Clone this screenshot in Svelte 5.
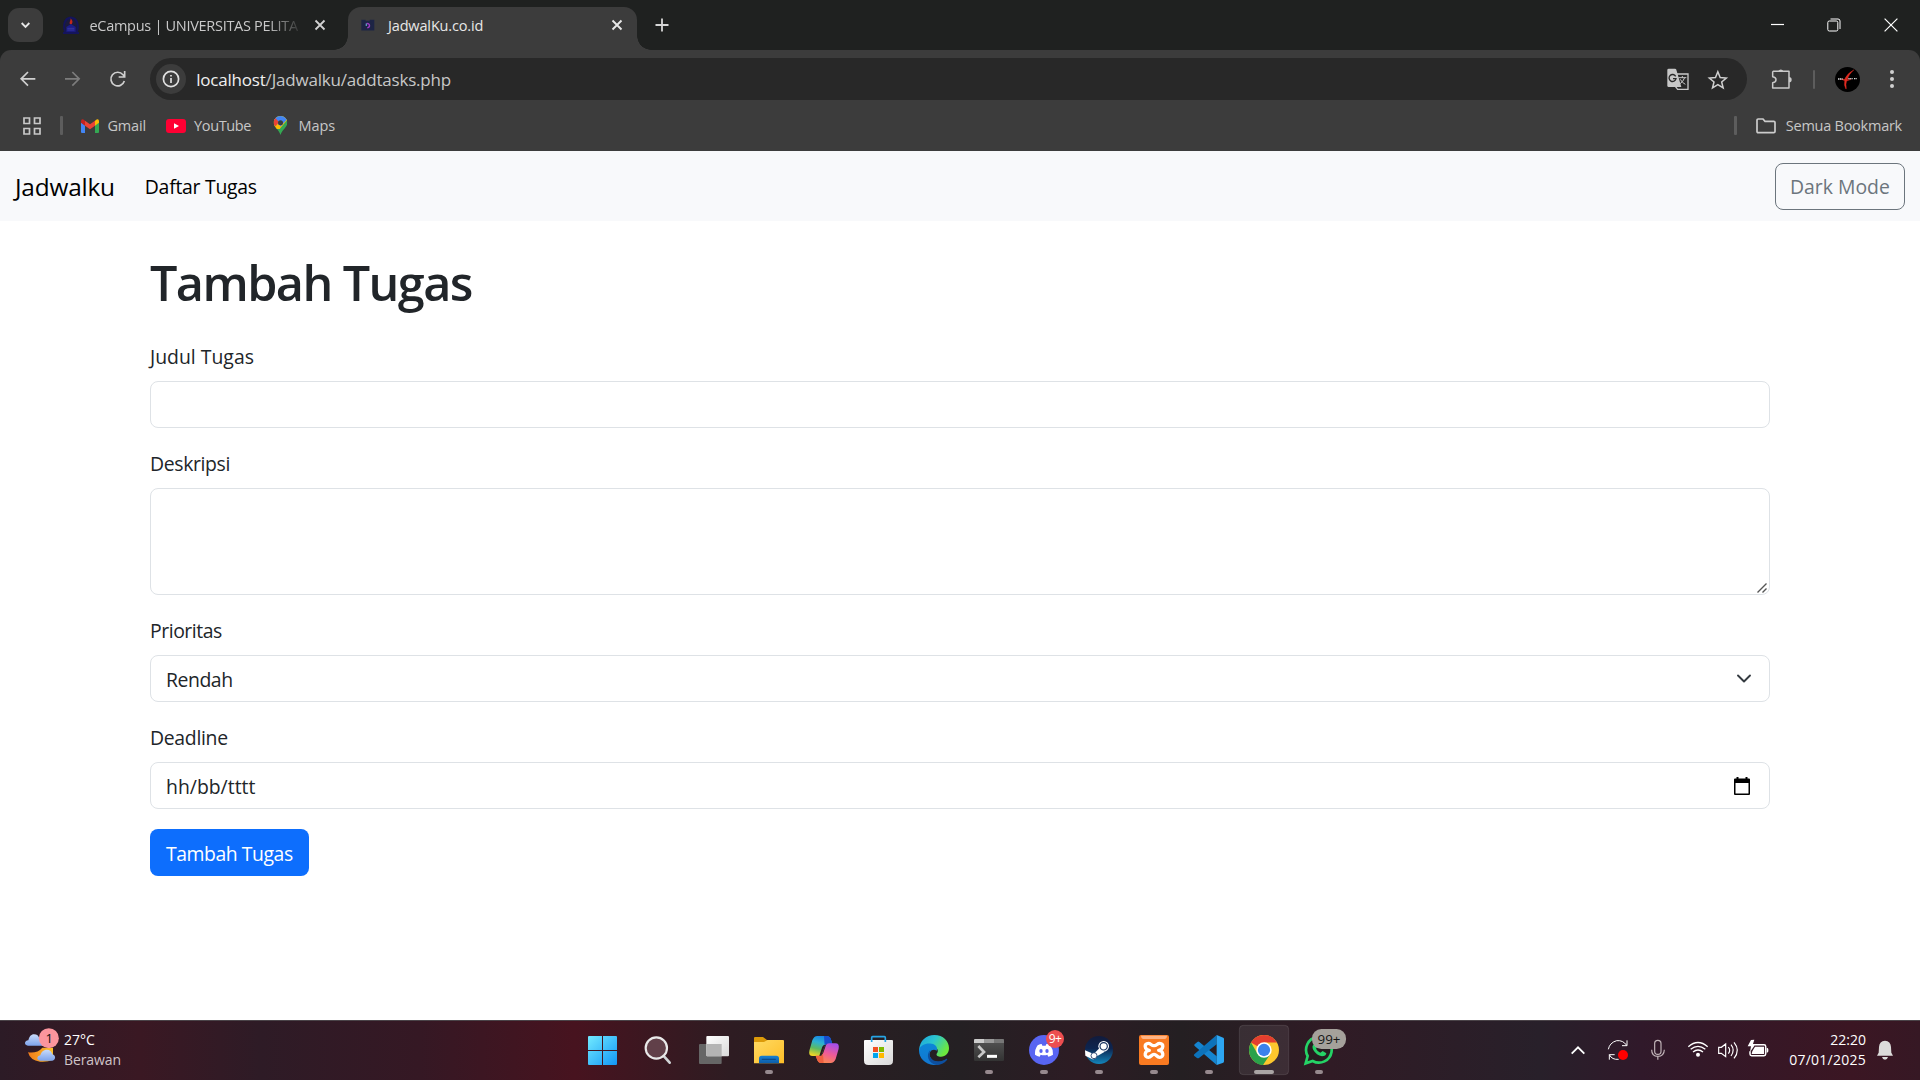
<script>
  const fields = [
    { label: 'Judul Tugas', kind: 'text', value: '' },
    { label: 'Deskripsi', kind: 'area', value: '' },
    { label: 'Prioritas', kind: 'select', value: 'Rendah' },
    { label: 'Deadline', kind: 'date', value: 'hh/bb/tttt' }
  ];
</script>

<div class="screen">
  <div class="tabstrip">
    <div class="tabsearch">
      <svg width="35" height="34" viewBox="24 24 105 102"><path d="M65 69l11.500 11.500L88 69" fill="none" stroke="#e8e8e8" stroke-width="5.500" /></svg>
    </div>
    <div class="tab idle">
      <svg class="fav" width="18" height="20" viewBox="184 44 54 60">
        <path d="M187 101h48v-6h-4c7-14 3-34-7-42-9-6-18-6-27 0-10 8-12 28-6 42h-4z" fill="#14145c" />
        <path d="M196 92c-8-15-2-36 15-37 17 1 22 22 14 37z" fill="#1b1b3c" />
        <path d="M210 54c6 7 7 12 3 18h-5c-3-7 2-10 2-18z" fill="#c3271b" />
        <path d="M197 80l14-9 14 9v14h-28z" fill="#1c1c88" /><path d="M200 84h21m-21 5h21" stroke="#4545a8" stroke-width="2" />
      </svg>
      <span class="tabtitle faded"><span class="t ec">eCampus | UNIVERSITAS PELITA</span></span>
      <svg class="x1" width="12" height="12" viewBox="0 0 12 12"><path d="M1.500 1.500l9 9m0-9l-9 9" stroke="#d2d2d2" stroke-width="1.800" /></svg>
    </div>
    <div class="tab current">
      <svg class="fav2" width="14" height="12" viewBox="64 58 40 34">
        <path d="M65 60h12v3h12v-3h13v31H65z" fill="#1d2445" /><path d="M80 71c9-2 12 9 2 12" fill="none" stroke="#a13ac4" stroke-width="4" /><path d="M79 71v7" stroke="#72b4e3" stroke-width="3" />
      </svg>
      <span class="tabtitle"><span class="t jk">JadwalKu.co.id</span></span>
      <svg width="12" height="12" viewBox="0 0 12 12"><path d="M1.500 1.500l9 9m0-9l-9 9" stroke="#e8e8e8" stroke-width="1.900" /></svg>
    </div>
    <svg class="plus" width="14" height="14" viewBox="0 0 14 14"><path d="M7 .5v13M.5 7h13" stroke="#d6d6d6" stroke-width="1.800" /></svg>
    <div class="winbtns">
      <svg width="13" height="14" viewBox="0 0 13 14"><path d="M0 6.500h13" stroke="#fff" stroke-width="1.200" /></svg>
      <svg width="14" height="14" viewBox="0 0 14 14" fill="none" stroke="#fff"><rect x=".8" y="3" width="10" height="10" rx="1.500" /><path d="M3.500 1h7.500q2 0 2 2v8" /></svg>
      <svg width="14" height="14" viewBox="0 0 14 14"><path d="M.6.6l12.800 12.800m0-12.800L.6 13.400" stroke="#fff" stroke-width="1.200" /></svg>
    </div>
  </div>

  <div class="toolwrap">
    <div class="toolbar">
      <svg width="20" height="20" viewBox="53 207 60 60" fill="none" stroke="#d0d0d0" stroke-width="5"><path d="M105 236.500H63M83 216l-20.500 20.500L83 257" /></svg>
      <svg width="20" height="20" viewBox="189 207 60 60" fill="none" stroke="#7c7c7c" stroke-width="5"><path d="M195 236.500h42M217 216l20.500 20.500L217 257" /></svg>
      <svg width="20" height="20" viewBox="324 207 60 60" fill="none" stroke="#d0d0d0" stroke-width="5"><path d="M373 243a20.500 20.500 0 1 1-4-19l4 5M374 213v18h-18" /></svg>
      <div class="omnibox">
        <span class="info"><svg width="18" height="18" viewBox="0 0 18 18"><circle cx="9" cy="9" r="7.600" fill="none" stroke="#e0e0e0" stroke-width="1.700" /><path d="M9 8v5M9 4.900v1.700" stroke="#e0e0e0" stroke-width="1.700" /></svg></span>
        <span class="url t"><b>localhost</b>/Jadwalku/addtasks.php</span>
        <svg width="22" height="22" viewBox="200 205 66 66">
          <path d="M230 223h33v46h-31l-7-9" fill="none" stroke="#c7c7c7" stroke-width="4" />
          <path d="M205 207h19q3 0 4 3l15 52h-38q-4 0-4-4v-47q0-4 4-4z" fill="#c7c7c7" />
          <path d="M226 230a10.500 10.500 0 1 0 1 7h-9" fill="none" stroke="#282828" stroke-width="4" />
          <path d="M234 234h24M246 229v5M253 234q-4 12-16 20M240 239q5 10 15 15" fill="none" stroke="#c7c7c7" stroke-width="3" />
        </svg>
        <svg width="20" height="20" viewBox="323 208 60 60"><path d="M352.500 216l7 17.500 18.500 1.500-14 12 4.500 18-16-10-16 10 4.500-18-14-12 18.500-1.500z" fill="none" stroke="#d0d0d0" stroke-width="4.500" /></svg>
      </div>
      <svg class="ext" width="22" height="22" viewBox="511 202 66 66"><path d="M518 212h47v50h-49v-16q10-1 10-9t-10-9v-14z" fill="none" stroke="#c9c9c9" stroke-width="4.500" stroke-linejoin="round" /><path d="M533 212a8 8 0 0 1 15 0zM565 229a8 8 0 0 1 0 16z" fill="#c9c9c9" /></svg>
      <i class="bar thin"></i>
      <svg class="avatar" width="25" height="25" viewBox="705 198 75 75"><circle cx="742.500" cy="235.500" r="37.500" fill="#000" /><path d="M762 206q-22 12-28 29l-12-1 12 5q-3 12 3 24 2 2 2-1-3-12 1-22l14-5-12 1q4-16 20-30z" fill="#e02a20" stroke="#e02a20" stroke-width="1" /><path d="M714 234h14m17-1h13m4 0h8" stroke="#ddd" stroke-width="4" stroke-dasharray="4 1.500" /></svg>
      <svg class="dots" width="6" height="20" viewBox="0 0 6 20" fill="#d0d0d0"><circle cx="3" cy="3" r="2" /><circle cx="3" cy="10" r="2" /><circle cx="3" cy="17" r="2" /></svg>
    </div>
    <div class="bookmarks">
      <svg width="18" height="18" viewBox="0 0 18 18" fill="none" stroke="#c8c8c8" stroke-width="1.700"><path d="M1 1h5.500v5.500H1zM11.500 1H17v5.500h-5.500zM1 11.500h5.500V17H1zM11.500 11.500H17V17h-5.500z" /></svg>
      <i class="bar"></i>
      <svg class="gm" width="18" height="14" viewBox="243 356 54 42"><path d="M243 366l12 9v23h-9q-3 0-3-3z" fill="#4285f4" /><path d="M297 366l-12 9v23h9q3 0 3-3z" fill="#34a853" /><path d="M285 361l6-4q6-1 6 6v4l-12 9z" fill="#fbbc04" /><path d="M255 361l15 11 15-11v15l-15 11-15-11z" fill="#ea4335" /><path d="M243 363q0-7 6-6l6 4v15l-12-9z" fill="#c5221f" /></svg>
      <span class="t gmail">Gmail</span>
      <svg class="yt" width="20" height="14" viewBox="0 0 20 14"><rect width="20" height="14" rx="3" fill="#f03" /><path d="M8 4.200v5.600L13 7z" fill="#fff" /></svg>
      <span class="t youtube">YouTube</span>
      <svg class="mp" width="15" height="19" viewBox="821 348 45 57"><clipPath id="pin"><path d="M843.500 348c12 0 20.500 9 20.500 20 0 14-15 19-20.500 37-5-18-20.500-23-20.500-37 0-11 9-20 20.500-20z" /></clipPath><g clip-path="url(#pin)"><path d="M821 348h45v57h-45z" fill="#34a853" /><path d="M821 345h45v12l-25 30h-20z" fill="#fbbc04" /><path d="M821 345h45v8l-22 26-23-20z" fill="#4285f4" /><path d="M866 355l-24 25 8-18z" fill="#4285f4" /><path d="M821 352l6 1 12 13-10 13-8-6z" fill="#ea4335" /></g><circle cx="843.500" cy="368" r="7.500" fill="#3c3c3c" /></svg>
      <span class="t maps">Maps</span>
      <i class="bar right"></i>
      <svg class="fold" width="20" height="16" viewBox="0 0 20 16"><path d="M1 2.200q0-1.200 1.200-1.200H7l2 2.300h8.800q1.200 0 1.200 1.200v9q0 1.200-1.200 1.200H2.200Q1 14.700 1 13.500z" fill="none" stroke="#ccc" stroke-width="1.700" /></svg>
      <span class="t semua">Semua Bookmark</span>
    </div>
  </div>

  <nav>
    <span class="t brand">Jadwalku</span>
    <span class="t navlink">Daftar Tugas</span>
    <button class="dark"><span class="t">Dark Mode</span></button>
  </nav>

  <main>
    <h1>Tambah Tugas</h1>
    {#each fields as f}
      <div class="field {f.kind}">
        <div class="label">{f.label}</div>
        <div class="control">
          <span class="t value">{f.value}</span>
          {#if f.kind === 'select'}
            <svg width="14" height="9" viewBox="0 0 14 9"><path d="M1 1.500l6 6 6-6" fill="none" stroke="#343a40" stroke-width="1.900" stroke-linecap="round" stroke-linejoin="round" /></svg>
          {:else if f.kind === 'date'}
            <svg width="16" height="18" viewBox="0 0 16 18"><path fill="#000" fill-rule="evenodd" d="M2.500 0h2v1.500h7V0h2v1.500H15q1 0 1 1V17q0 1-1 1H1q-1 0-1-1V2.500q0-1 1-1h1.500zM1.500 6v10.500h13V6z" /></svg>
          {:else if f.kind === 'area'}
            <svg class="grip" width="10" height="10" viewBox="0 0 10 10"><path d="M.5 9.500l9-9M5.500 9.500l4-4" stroke="#555" stroke-width="1.400" /></svg>
          {/if}
        </div>
      </div>
    {/each}
    <button class="submit">Tambah Tugas</button>
  </main>

  <footer>
    <div class="weather">
      <svg class="sky" width="36" height="36" viewBox="72 20 108 108">
        <defs><linearGradient id="cl" x2="0" y2="1"><stop stop-color="#c9dbfa" /><stop offset="1" stop-color="#7da3ec" /></linearGradient><linearGradient id="mn" x2="1" y2="0"><stop stop-color="#ef7a1b" /><stop offset="1" stop-color="#fdc22d" /></linearGradient></defs>
        <path d="M84 96q28 4 43-14h32v36q-18 8-39 6-30-4-36-28z" fill="url(#mn)" />
        <path d="M84 76c-12 0-12-15 1-16 3-11 8-18 17-18s14 5 16 12h10v22z" fill="url(#cl)" />
        <path d="M121 121c-12-1-12-14 0-16 3-12 12-17 20-17s14 5 16 14c11 2 11 18 0 19z" fill="url(#cl)" />
        <circle cx="146.500" cy="53.500" r="30" fill="#fb959d" />
        <text x="148" y="67" font-size="39" text-anchor="middle" fill="#111">1</text>
      </svg>
      <div class="wtext"><span class="t deg">27°C</span><span class="t ber">Berawan</span></div>
    </div>

    <div class="apps">
      <svg viewBox="21 15 150 150"><defs><linearGradient id="wn" x2="1" y2="1"><stop stop-color="#72eaff" /><stop offset="1" stop-color="#1296f5" /></linearGradient></defs><path d="M57 48h39v42H54V51q0-3 3-3zM99 48h39q3 0 3 3v39H99zM54 93h42v42H57q-3 0-3-3zM99 93h42v39q0 3-3 3H99z" fill="url(#wn)" /></svg>
      <svg viewBox="186 15 150 150"><path d="M280 107l19 21" stroke="#d0d4d6" stroke-width="8" stroke-linecap="round" /><circle cx="259" cy="84" r="32" fill="#6b4b54" fill-opacity=".8" stroke="#e9e9e9" stroke-width="6.500" /></svg>
      <svg viewBox="351 15 150 150"><defs><linearGradient id="tv" x2="1" y2="1"><stop stop-color="#fff" /><stop offset="1" stop-color="#d9d9d9" /></linearGradient></defs><rect x="387" y="72" width="68" height="60" rx="3" fill="#666" /><rect x="409" y="48" width="68" height="61" rx="3" fill="url(#tv)" /><path d="M409 72h46v37h-43q-3 0-3-3z" fill="#b4b4b4" /></svg>
      <svg viewBox="516 15 150 150"><defs><linearGradient id="fd" x2="1" y2="1"><stop stop-color="#ffda62" /><stop offset="1" stop-color="#fdbd27" /></linearGradient><linearGradient id="fb" x2="0" y2="1"><stop stop-color="#1780d2" /><stop offset="1" stop-color="#0d5da8" /></linearGradient></defs><path d="M552 54q0-3 3-3h24l12 9h48v20h-87z" fill="#dc9a09" /><path d="M552 66h30l11-6h46q3 0 3 3v67h-90z" fill="url(#fd)" /><path d="M567 130v-15q0-8 8-8h44q8 0 8 8v15z" fill="url(#fb)" /><path d="M577 118h39" stroke="#0a4b8d" stroke-width="4" stroke-linecap="round" /><rect class="ind" x="585" y="150" width="24" height="12" rx="6" /></svg>
      <svg viewBox="681 15 150 150">
        <defs><linearGradient id="ca" x1=".6" y1="0" x2=".3" y2="1"><stop stop-color="#1683e8" /><stop offset=".35" stop-color="#2db1d1" /><stop offset=".65" stop-color="#5cba62" /><stop offset="1" stop-color="#eed526" /></linearGradient><linearGradient id="cb" x1=".7" y1="0" x2=".3" y2="1"><stop stop-color="#a64eea" /><stop offset=".5" stop-color="#ef5b97" /><stop offset="1" stop-color="#fb8b4b" /></linearGradient></defs>
        <path d="M742 48h28q10 0 13 11l4 12h-13q-8 0-11 10l-7 20q-2 7-10 7h-18q-13 0-10-16l9-31q5-13 15-13z" fill="url(#ca)" />
        <path d="M762 48h8q10 0 13 11l4 12h-13q-8 0-10 7z" fill="#174dcd" />
        <path d="M782 129h-28q-10 0-13-11l-4-11h13q7 0 10-9l7-20q2-8 11-8h18q13 0 10 16l-9 31q-5 12-15 12z" fill="url(#cb)" />
        <path d="M761 129h-8q-9 0-12-11l-4-11h13q7 0 9-6z" fill="#ee6040" />
        <path d="M767 74l-4 7-9 26h-6l9-27q2-6 10-6z" fill="#2c1c20" />
      </svg>
      <svg viewBox="846 15 150 150"><path d="M905 66V53q0-3 3-3h35q3 0 3 3v13" fill="none" stroke="#27a6e6" stroke-width="5" /><path d="M885 60h81q3 0 3 3v59q0 13-13 13h-61q-13 0-13-13V63q0-3 3-3z" fill="url(#tv)" /><path d="M905 66v-6M946 66v-6" stroke="#27a6e6" stroke-width="5" /><path d="M909 81h15v15h-15z" fill="#f25022" /><path d="M927 81h15v15h-15z" fill="#7fba00" /><path d="M909 99h15v15h-15z" fill="#00a4ef" /><path d="M927 99h15v15h-15z" fill="#ffb900" /></svg>
      <svg viewBox="1011 15 150 150">
        <defs><linearGradient id="ea" x2="1" y2=".5"><stop stop-color="#1aa2df" /><stop offset=".5" stop-color="#2cc5cf" /><stop offset="1" stop-color="#6ce83f" /></linearGradient><linearGradient id="eb" x2="0" y2="1"><stop stop-color="#0c86d8" /><stop offset="1" stop-color="#1276cf" /></linearGradient></defs>
        <path d="M1047 91c2-30 22-46 46-46 27 0 44 19 44 39 0 16-10 26-24 26-9 0-15-4-13-9 7-7 4-20-12-20-20 0-37 6-41 14z" fill="url(#ea)" />
        <path d="M1047 91c3-17 22-23 38-20 13 2 19 12 15 21-12-9-26 4-20 18 7 17 26 20 44 11-9 11-22 15-33 14-26-2-44-20-44-44z" fill="url(#eb)" />
        <path d="M1081 90c-8 18 4 35 24 34 11 0 18-4 24-8 2 0 4 1 2 4-8 10-20 15-31 15-25-4-34-30-19-45z" fill="#0d4f9f" />
      </svg>
      <svg class="later" viewBox="12 15 150 150"><defs><linearGradient id="tm" x2="0" y2="1"><stop stop-color="#555" /><stop offset="1" stop-color="#333" /></linearGradient></defs><rect x="42" y="57" width="90" height="66" rx="4" fill="url(#tm)" /><path d="M46 57h26v12H42v-8q0-4 4-4z" fill="#ccc" /><path d="M72 57h30v12H72z" fill="#999" /><path d="M102 57h26q4 0 4 4v8h-30z" fill="#777" /><path d="M55 78l17 18-17 16" fill="none" stroke="#c8c8c8" stroke-width="8" /><path d="M81 109h30" stroke="#fff" stroke-width="9" /><rect class="ind" x="75" y="150" width="24" height="12" rx="6" /></svg>
      <svg viewBox="177 15 150 150"><circle cx="252" cy="90" r="45" fill="#5865f2" /><path d="M233 76q8-4 12-4l2 5h10l2-5q6 0 12 4 9 13 8 28-7 5-14 6l-3-6q-10 3-20 0l-3 6q-8-1-14-6-1-16 8-28z" fill="#fff" /><ellipse cx="243" cy="93" rx="5" ry="6" fill="#5865f2" /><ellipse cx="261" cy="93" rx="5" ry="6" fill="#5865f2" /><circle cx="285" cy="57" r="27" fill="#ed4e50" /><text class="nine" x="285" y="69" font-size="36" text-anchor="middle" fill="#fff">9+</text><rect class="ind" x="240" y="150" width="24" height="12" rx="6" /></svg>
      <svg viewBox="342 15 150 150"><defs><linearGradient id="st" x2="0" y2="1"><stop stop-color="#111b3c" /><stop offset=".45" stop-color="#0d2550" /><stop offset="1" stop-color="#1386bb" /></linearGradient></defs><circle cx="417" cy="90" r="42" fill="url(#st)" /><path d="M375 91l26 11 20-20 12 14-22 13q-5 13-17 7l-18-9z" fill="#fff" /><circle cx="431" cy="79" r="16" fill="#fff" /><circle cx="431" cy="79" r="11" fill="#fff" stroke="#173361" stroke-width="3.500" /><circle cx="402" cy="107" r="9" fill="#fff" stroke="#173361" stroke-width="2.500" /><rect class="ind" x="405" y="150" width="24" height="12" rx="6" /></svg>
      <svg viewBox="507 15 150 150"><rect x="537" y="45" width="90" height="90" rx="6" fill="#f97a21" /><path d="M543 47h78q0 10-10 10h-58q-10 0-10-10z" fill="#fdb385" /><path d="M568 91c-15-2-17-21-3-21 8 0 8 7 17 7s9-7 17-7c14 0 12 19-3 21 15 1 17 21 3 21-9 0-9-9-17-9s-8 9-17 9c-14 0-12-20 3-21z" fill="none" stroke="#fff" stroke-width="10" stroke-linejoin="round" /><rect class="ind" x="570" y="150" width="24" height="12" rx="6" /></svg>
      <svg viewBox="672 15 150 150"><path d="M770 135l-66-57q-3-3 0-5l8-7q3-3 6 0l52 43z" fill="#1584cf" /><path d="M703 103q-3 2 0 5l8 6q3 2 6 0l53-41V45z" fill="#0d73bb" /><path d="M770 45l20 8q2 1 2 4v67q0 3-2 4l-20 7z" fill="#2da6f2" /><rect class="ind" x="735" y="150" width="24" height="12" rx="6" /></svg>
      <svg viewBox="837 15 150 150"><rect x="838" y="16" width="148" height="148" rx="12" fill="#fff" fill-opacity=".08" stroke="#fff" stroke-opacity=".1" stroke-width="3" /><circle cx="912" cy="90" r="45" fill="#fdc72d" /><path d="M912 90l-39-22.500A45 45 0 0 1 951 67.500h-39z" fill="#e43e2f" /><path d="M912 90h0l19.500 11.300L909 135A45 45 0 0 1 873 67.500l19.500 33.800z" fill="#2aa24a" /><circle cx="912" cy="90" r="23" fill="#fff" /><circle cx="912" cy="90" r="18.500" fill="#3b82ec" /><rect x="882" y="150" width="60" height="12" rx="6" fill="#aaa5a5" /></svg>
      <svg viewBox="1002 15 150 150"><path d="M1037 130l6-22a38.500 38.500 0 1 1 15 15z" fill="#271d20" stroke="#25d366" stroke-width="8" /><path d="M1062 72q-8 6-2 18 9 16 26 19 12 0 13-9l-11-7-7 5q-9-4-13-12l4-6-5-10z" fill="#25d366" /><rect x="1056" y="27" width="102" height="60" rx="28" fill="#a5a19b" /><text x="1107" y="71" font-size="40" text-anchor="middle" fill="#161616">99+</text><rect class="ind" x="1065" y="150" width="24" height="12" rx="6" /></svg>
    </div>

    <svg class="tray" width="200" height="30" viewBox="90 45 600 90" fill="none" stroke="#fff" stroke-width="4">
      <path d="M95 101l19-19 19 19" stroke-width="5.500" />
      <path d="M205 88q4-20 25-26 19-2 30 14M261 61v16h-15M208 119v-15h16M208 104q8 16 28 14" stroke-width="3" /><circle cx="249" cy="105" r="15" fill="#f00" stroke="none" />
      <g stroke="#c2b5b9" stroke-width="3.500"><rect x="344" y="61" width="19" height="42" rx="9.500" /><path d="M335 89q0 20 18.500 20T373 89M353.500 109v10" /></g>
      <path d="M445 80q29-25 58 0M452 88q22-18 44 0M459 96q15-12 30 0" /><circle cx="474" cy="104" r="6" fill="#fff" stroke="none" />
      <path d="M536 82h8l13-10v38l-13-10h-8zM565 81q8 10 0 20M573 74q13 16 0 34M582 67q20 24 0 48" stroke-width="3.500" />
      <path d="M644 74h28q5 0 5 5v23q0 5-5 5h-37q-5 0-5-5v-8" stroke-width="4.500" /><path d="M680 83q5 0 5 5v6q0 4-5 4zM645 80h27v22h-37l2-8z" fill="#fff" stroke="none" /><path d="M633 60l10-1-4 13h8l-17 24 3-17h-10z" fill="#fff" stroke="none" />
    </svg>
    <div class="clock"><span class="t time">22:20</span><span class="t today">07/01/2025</span></div>
    <svg class="bell" width="18" height="20" viewBox="1008 61 54 60" fill="#dcdcda"><path d="M1035 63q17 1 18 19l1 17 5 9h-48l5-9 1-17q1-18 18-19zM1026 112h18q-2 8-9 8t-9-8z" /></svg>
  </footer>
</div>

<style>
  :global(body) { overflow: hidden; }
  .screen { width: 1920px; height: 1080px; display: flex; flex-direction: column; background: #fff; font-family: 'Open Sans', 'Noto Sans', sans-serif; color: #212529; }
  .screen * { box-sizing: border-box; }
  svg { display: block; flex: none; overflow: visible; }
  span { white-space: nowrap; }
  .t { display: inline-block; }
  .tabstrip { height: 50px; background: #1f2120; display: flex; align-items: center; padding-left: 8px; font-size: 14.500px; color: #c9c9c9; flex: none; }
  .tabsearch { width: 35px; height: 34px; border-radius: 11px; background: #3c3c3c; }
  .tab { display: flex; align-items: center; }
  .idle { width: 305px; padding-left: 18.500px; }
  .tabtitle { margin-left: 10px; width: 209px; }
  .ec { letter-spacing: -0.29px; }
  .jk { letter-spacing: -0.15px; }
  .faded { mask-image: linear-gradient(90deg, #000 85%, transparent 102%); }
  .x1 { margin-left: 15px; }
  .current { width: 289px; height: 43px; margin-top: 7px; padding: 0 14px 7px 13px; border-radius: 13px 13px 0 0; background: #3c3c3c; color: #e8e8e8; position: relative; }
  .current .tabtitle { width: 224px; margin-left: 13px; margin-right: auto; }
  .current::before, .current::after { content: ''; position: absolute; bottom: 0; width: 14px; height: 14px; }
  .current::before { left: -14px; background: radial-gradient(circle at 0 0, transparent 13.500px, #3c3c3c 14px); }
  .current::after { right: -14px; background: radial-gradient(circle at 100% 0, transparent 13.500px, #3c3c3c 14px); }
  .plus { margin-left: 18px; }
  .winbtns { margin-left: auto; margin-right: 22px; display: flex; gap: 43px; }
  .toolwrap { height: 101px; background: #1f2120; flex: none; display: flex; flex-direction: column; }
  .toolbar { height: 58px; border-radius: 11px 11px 0 0; background: #3c3c3c; display: flex; align-items: center; padding: 0 25px 0 17.700px; gap: 25px; }
  .omnibox { margin-left: -3px; width: 1597px; height: 42px; border-radius: 21px; background: #282828; display: flex; align-items: center; padding: 0 19px 0 6px; gap: 19px; flex: none; }
  .info { width: 30px; height: 30px; border-radius: 50%; background: #3c3c3c; display: grid; place-items: center; }
  .url { font-size: 17px; letter-spacing: -0.2px; color: #c7c7c7; margin-left: -8.500px; margin-right: auto; }
  .url b { font-weight: 400; color: #f0f0f0; }
  .ext { margin-left: -1px; }
  .bar { width: 3px; height: 19px; border-radius: 1px; background: #5d5d5d; flex: none; }
  .thin { width: 2px; margin-left: -5px; }
  .avatar { margin-left: -5px; }
  .dots { margin-left: 4px; }
  .bookmarks { height: 43px; background: #3c3c3c; display: flex; align-items: center; padding: 0 17px 8px 23px; font-size: 14.500px; color: #c7c7c7; }
  .bookmarks .bar { margin-left: 19px; }
  .gm { margin-left: 18px; }
  .gmail { margin-left: 8.500px; width: 38.500px; letter-spacing: -0.2px; }
  .yt { margin-left: 20px; }
  .youtube { margin-left: 8px; width: 58px; letter-spacing: -0.35px; }
  .mp { margin-left: 21px; }
  .maps { margin-left: 10.500px; letter-spacing: -0.1px; }
  .bookmarks .right { margin-left: auto; }
  .fold { margin-left: 19.500px; }
  .semua { margin-left: 9.500px; margin-right: 1px; letter-spacing: -0.25px; }
  nav { height: 70px; background: #f8f9fb; display: flex; align-items: center; padding: 1px 15px 0; color: #000; flex: none; }
  .brand { font-size: 24.400px; letter-spacing: -0.2px; }
  .navlink { font-size: 19.400px; margin-left: 30px; letter-spacing: -0.26px; }
  button { font-family: inherit; height: 47px; border-radius: 8px; padding: 0 0 0 14px; font-size: 19.400px; text-align: left; }
  .dark { margin-left: auto; width: 130px; border: 1px solid #6c757d; color: #6c757d; background: transparent; }
  main { flex: 1; padding: 31px 150px 0; min-height: 0; }
  h1 { margin: 0 0 30px; font-size: 48.500px; line-height: 60px; font-weight: 600; height: 60px; letter-spacing: -1.550px; }
  .label { font-size: 19.400px; height: 30px; line-height: 30px; margin-bottom: 9px; }
  .field { margin-bottom: 21px; }
  .control { height: 47px; border: 1px solid #dee2e6; border-radius: 8px; padding: 0 18px 0 15px; display: flex; align-items: center; justify-content: space-between; font-size: 19.400px; }
  .value { padding-top: 2px; }
  .area .label { letter-spacing: -0.35px; }
  .area .control { height: 107px; align-items: flex-end; padding: 0 2px 1px; }
  .select .label, .select .value { letter-spacing: -0.45px; }
  .date .label { letter-spacing: -0.3px; }
  .date .control { padding-right: 19px; }
  .submit { width: 159px; border: 0; padding: 2px 0 0 16px; margin-top: -1px; background: #0d6efd; color: #fff; letter-spacing: -0.45px; white-space: nowrap; display: block; }
  footer { height: 60px; border-top: 1px solid #4a4348; padding-bottom: 1px; background: linear-gradient(90deg, #2c1b26 0, #3a1823 140px, #2e1b26 260px, #351824 420px, #47131f 575px, #2e1c22 730px, #242023 960px, #2d1c24 1080px, #241f22 1180px, #301b25 1330px, #28202a 1540px, #30192a 1640px, #3b1623 1850px, #361824); display: flex; align-items: center; color: #fff; font-size: 14px; flex: none; }
  .weather { display: flex; width: 577px; padding-left: 24px; align-items: center; }
  .sky { margin-bottom: 10px; }
  .wtext { margin-left: 4px; display: flex; flex-direction: column; line-height: 20px; align-items: flex-start; }
  .ber { color: #cfc4c8; letter-spacing: -0.1px; }
  .apps { display: flex; gap: 5px; }
  .apps svg { width: 50px; height: 50px; }
  .apps .later { margin-left: 2px; }
  .nine { letter-spacing: -1.500px; }
  .ind { fill: #96898e; }
  .tray { margin-left: 226px; }
  .clock { margin-left: auto; display: flex; flex-direction: column; align-items: flex-end; line-height: 20px; }
  .today { letter-spacing: 0.25px; }
  .bell { margin: 0 26px 0 10px; }
</style>
